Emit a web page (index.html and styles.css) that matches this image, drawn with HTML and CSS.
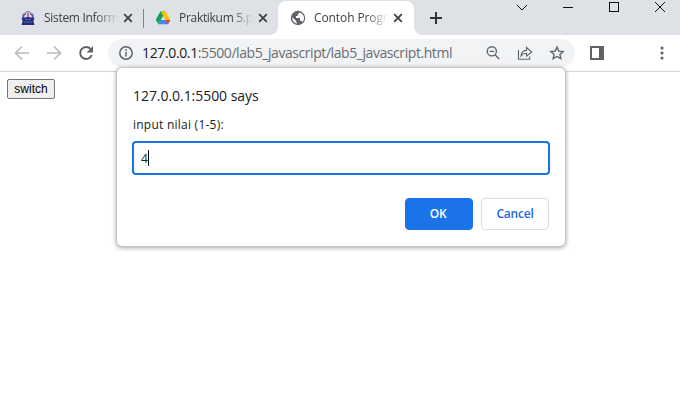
FILE: index.html
```html
<!DOCTYPE html>
<html lang="en">
<head>
<meta charset="utf-8">
<title>Contoh Program</title>
<link rel="stylesheet" href="styles.css">
</head>
<body>
<div class="browser">
  <header class="tabstrip">
    <div class="tab first">
      <svg class="favicon" viewBox="0 0 16 16"><path d="M2 9V5Q3 3 5 2.5Q6 1 8 .7Q10 1 11 2.5Q13 3 14 5V9Z" fill="#8a90ba"/><path d="M5 4L8 2L11 4L12 8H4Z" fill="#d8d9e8"/><path d="M7.2 3h1.6v4H7.2z" fill="#cf5362"/><path d="M3 8Q3 4 6 4M10 4Q13 4 13 8" fill="none" stroke="#454d95"/><path d="M1.5 8L8 7L14.5 8L13 12H3Z" fill="#242b80"/><path d="M2.5 11.5h11L14.5 15h-13Z" fill="#262d7c"/><path d="M5 9.5h6M4 12h8" stroke="#8589b9" stroke-width=".6"/></svg>
      <span class="tab-title">Sistem Inform</span>
      <svg class="close" viewBox="0 0 10 10"><path d="M1.2 1.2l7.6 7.6M8.8 1.2L1.2 8.8"/></svg>
    </div>
    <div class="tab second">
      <svg class="favicon" viewBox="0 0 16 16"><path d="M5.5 1.5L8 5.8L3.3 14L.8 10z" fill="#14a05a"/><path d="M5.5 1.5h5L8 5.8z" fill="#188038"/><path d="M10.5 1.5L15.3 10h-4.9L5.5 1.5z" fill="#ffc107"/><path d="M5.6 10h9.7l-2.4 4.3H3.2z" fill="#4285f4"/><path d="M10.4 10h4.9l-2.4 4.3z" fill="#ea4335"/><path d="M5.5 1.5L8 5.8L5.6 10H.8z" fill="#14a05a"/></svg>
      <span class="tab-title">Praktikum 5.p</span>
      <svg class="close" viewBox="0 0 10 10"><path d="M1.2 1.2l7.6 7.6M8.8 1.2L1.2 8.8"/></svg>
    </div>
    <div class="tab active">
      <svg class="favicon" viewBox="0 0 16 16"><circle cx="8" cy="8" r="7.2" fill="#5f6368"/><path d="M9.6 2.5L7.8 4.2V6H6v2h4v2.8h1.4l1.2 1.1A5.8 5.8 0 0 0 9.6 2.5ZM2.3 7.2L6.2 10.9v1.2l1.2 1.7A5.8 5.8 0 0 1 2.3 7.2Z" fill="#fff"/></svg>
      <span class="tab-title">Contoh Progr</span>
      <svg class="close" viewBox="0 0 10 10"><path d="M1.2 1.2l7.6 7.6M8.8 1.2L1.2 8.8"/></svg>
    </div>
    <svg class="newtab" viewBox="0 0 12 12"><path d="M6 0v12M0 6h12"/></svg>
    <div class="window-controls">
      <svg viewBox="0 0 12 12"><path d="M1 4l5 5 5-5"/></svg>
      <svg viewBox="0 0 12 12"><path d="M1 6.5h10" shape-rendering="crispEdges"/></svg>
      <svg viewBox="0 0 12 12"><path d="M1.5 1.5h9v9h-9z" shape-rendering="crispEdges"/></svg>
      <svg viewBox="0 0 12 12"><path d="M1 1l10 10M11 1L1 11"/></svg>
    </div>
  </header>
  <nav class="toolbar">
    <svg class="nav-icon faded" viewBox="0 0 16 16"><path d="M15 8H2M8 1.5L1.5 8L8 14.5"/></svg>
    <svg class="nav-icon faded" viewBox="0 0 16 16"><path d="M1 8h13M8 1.5L14.5 8L8 14.5"/></svg>
    <svg class="nav-icon reload" viewBox="0 0 16 16"><path d="M12.7 4A6 6 0 1 0 13.8 10"/><path class="solid" d="M15 1v6.4H8.6z"/></svg>
    <div class="omnibox">
      <svg class="info" viewBox="0 0 16 16"><circle cx="8" cy="8" r="6.2"/><path d="M8 7v4.5M8 4.3v1.6"/></svg>
      <span class="url"><b>127.0.0.1</b>:5500/lab5_javascript/lab5_javascript.html</span>
      <svg class="action" viewBox="0 0 16 16"><circle cx="6.8" cy="6.3" r="4.6"/><path d="M10 9.7l4.2 4.3M4.6 6.3H9"/></svg>
      <svg class="action share" viewBox="0 0 16 16"><path d="M1.5 5v9.3h11.2V11.5"/><path d="M4 11Q4.5 5.6 9.5 5.4V2.5L14.8 7L9.5 11.2V8.3Q6 8.2 4 11Z"/></svg>
      <svg class="action" viewBox="0 0 16 16"><path d="M8 2.1l1.8 4 4.4.4-3.3 2.9 1 4.3L8 11.5l-3.9 2.2 1-4.3L1.8 6.5l4.4-.4z"/></svg>
    </div>
    <svg class="panel" viewBox="0 0 14 14"><path d="M0 0h14v14H0zM2 2v10h7V2z"/></svg>
    <svg class="menu" viewBox="0 0 4 14"><circle cx="2" cy="2" r="1.55"/><circle cx="2" cy="7" r="1.55"/><circle cx="2" cy="12" r="1.55"/></svg>
  </nav>
  <main class="page"><button class="switch">switch</button></main>
  <section class="dialog" role="dialog">
    <h1>127.0.0.1:5500 says</h1>
    <p>input nilai (1-5):</p>
    <div class="field"><span>4</span><i class="caret"></i></div>
    <div class="buttons"><button class="ok">OK</button><button class="cancel">Cancel</button></div>
  </section>
</div>
</body>
</html>
```
FILE: styles.css
```css
* { box-sizing: border-box; }
body { margin: 0; background: #fff; font-family: "Open Sans", "Noto Sans", sans-serif; color: #202124; }
svg { display: block; flex: none; fill: none; }
.browser { position: relative; width: 680px; height: 414px; overflow: hidden; }
.tabstrip { display: flex; height: 35px; background: #dee1e6; }
.tab { position: relative; display: flex; align-items: center; width: 135px; height: 34px; margin-top: 1px; padding-left: 12px; }
.tab.first { margin-left: 8px; }
.tab.first::after { content: ""; position: absolute; right: -1px; top: 8px; width: 1px; height: 19px; background: #82858a; }
.tab.active { width: 136px; background: #fff; border-radius: 8px 8px 0 0; }
.tab.active::before, .tab.active::after { content: ""; position: absolute; bottom: 0; width: 8px; height: 8px; }
.tab.active::before { left: -8px; background: radial-gradient(circle at 0 0, transparent 7.5px, #fff 8px); }
.tab.active::after { right: -8px; background: radial-gradient(circle at 100% 0, transparent 7.5px, #fff 8px); }
.favicon { width: 16px; height: 16px; }
.tab-title { width: 74px; margin: 0 -2px 0 8px; white-space: nowrap; font-size: 12px; letter-spacing: -.3px; line-height: 18px; color: #3c4043; -webkit-mask-image: linear-gradient(90deg, #000 52px, transparent 74px); mask-image: linear-gradient(90deg, #000 52px, transparent 74px); }
.active .tab-title { letter-spacing: -.1px; }
.close { width: 10px; height: 10px; margin-left: 7px; stroke: #3c4043; stroke-width: 1.8; }
.newtab { width: 12px; height: 12px; margin: 12px 0 0 16px; stroke: #303337; stroke-width: 2; }
.window-controls { display: flex; gap: 34px; margin: 1px 14px 0 auto; }
.window-controls svg { width: 12px; height: 12px; stroke: #111; stroke-width: 1; }
.toolbar { display: flex; align-items: center; height: 37px; border-bottom: 1px solid #d5d7da; padding: 0 17px 0 14px; }
.nav-icon { width: 16px; height: 16px; margin-right: 16px; stroke: #5f6368; stroke-width: 1.9; }
.nav-icon.faded { stroke: #b9bbbe; stroke-width: 1.7; }
.nav-icon.reload { margin-right: 14px; }
.solid { fill: #5f6368; stroke: none; }
.omnibox { display: flex; align-items: center; width: 467px; height: 28px; padding: 0 10px; border-radius: 14px; background: #f1f3f4; }
.info { width: 16px; height: 16px; stroke: #5f6368; stroke-width: 1.5; }
.url { margin: 0 auto 0 8px; white-space: nowrap; font-size: 14px; letter-spacing: -.43px; line-height: 20px; color: #696d72; }
.url b { font-weight: 400; color: #202124; letter-spacing: -.36px; }
.action { width: 16px; height: 16px; margin-left: 16px; stroke: #5f6368; stroke-width: 1.35; }
.share { stroke-width: 1.1; }
.panel { width: 14px; height: 14px; margin-left: 15px; fill: #5f6368; fill-rule: evenodd; }
.menu { width: 4px; height: 14px; margin-left: auto; margin-right: -1px; fill: #5f6368; }
.page { padding: 7px; }
.switch { display: block; width: 48px; height: 20px; padding: 0; border: 1px solid #767676; border-radius: 2px; background: #efefef; color: #000; font: 12px/17px "Liberation Sans", Arial, sans-serif; }
.dialog { position: absolute; left: 117px; top: 68px; width: 448px; height: 178px; padding: 18px 16px 16px; background: #fff; border-radius: 5px; box-shadow: 0 0 0 1px #c5c6c8, 0 1px 4px 1px rgba(0,0,0,.35); }
.dialog h1 { margin: 0; font-size: 14px; font-weight: 400; line-height: 20px; letter-spacing: -.05px; }
.dialog p { margin: 10px 0 7px; font-size: 12px; letter-spacing: .24px; line-height: 18px; }
.field { display: flex; align-items: center; width: 418px; height: 34px; margin-left: -1px; padding-left: 7px; border: 2px solid #1a73e8; border-radius: 4px; font-size: 12px; }
.caret { width: 1px; height: 16px; background: #000; }
.buttons { display: flex; justify-content: flex-end; gap: 8px; margin-top: 23px; }
.buttons button { width: 68px; height: 32px; padding: 0; border-radius: 4px; font: 600 12px/30px "Open Sans", sans-serif; }
.buttons .ok { padding-right: 2px; border: 1px solid #1a73e8; background: #1a73e8; color: #fff; letter-spacing: -.3px; }
.cancel { border: 1px solid #dadce0; background: #fff; color: #1a67df; }
.buttons .cancel { letter-spacing: -.2px; }
```
